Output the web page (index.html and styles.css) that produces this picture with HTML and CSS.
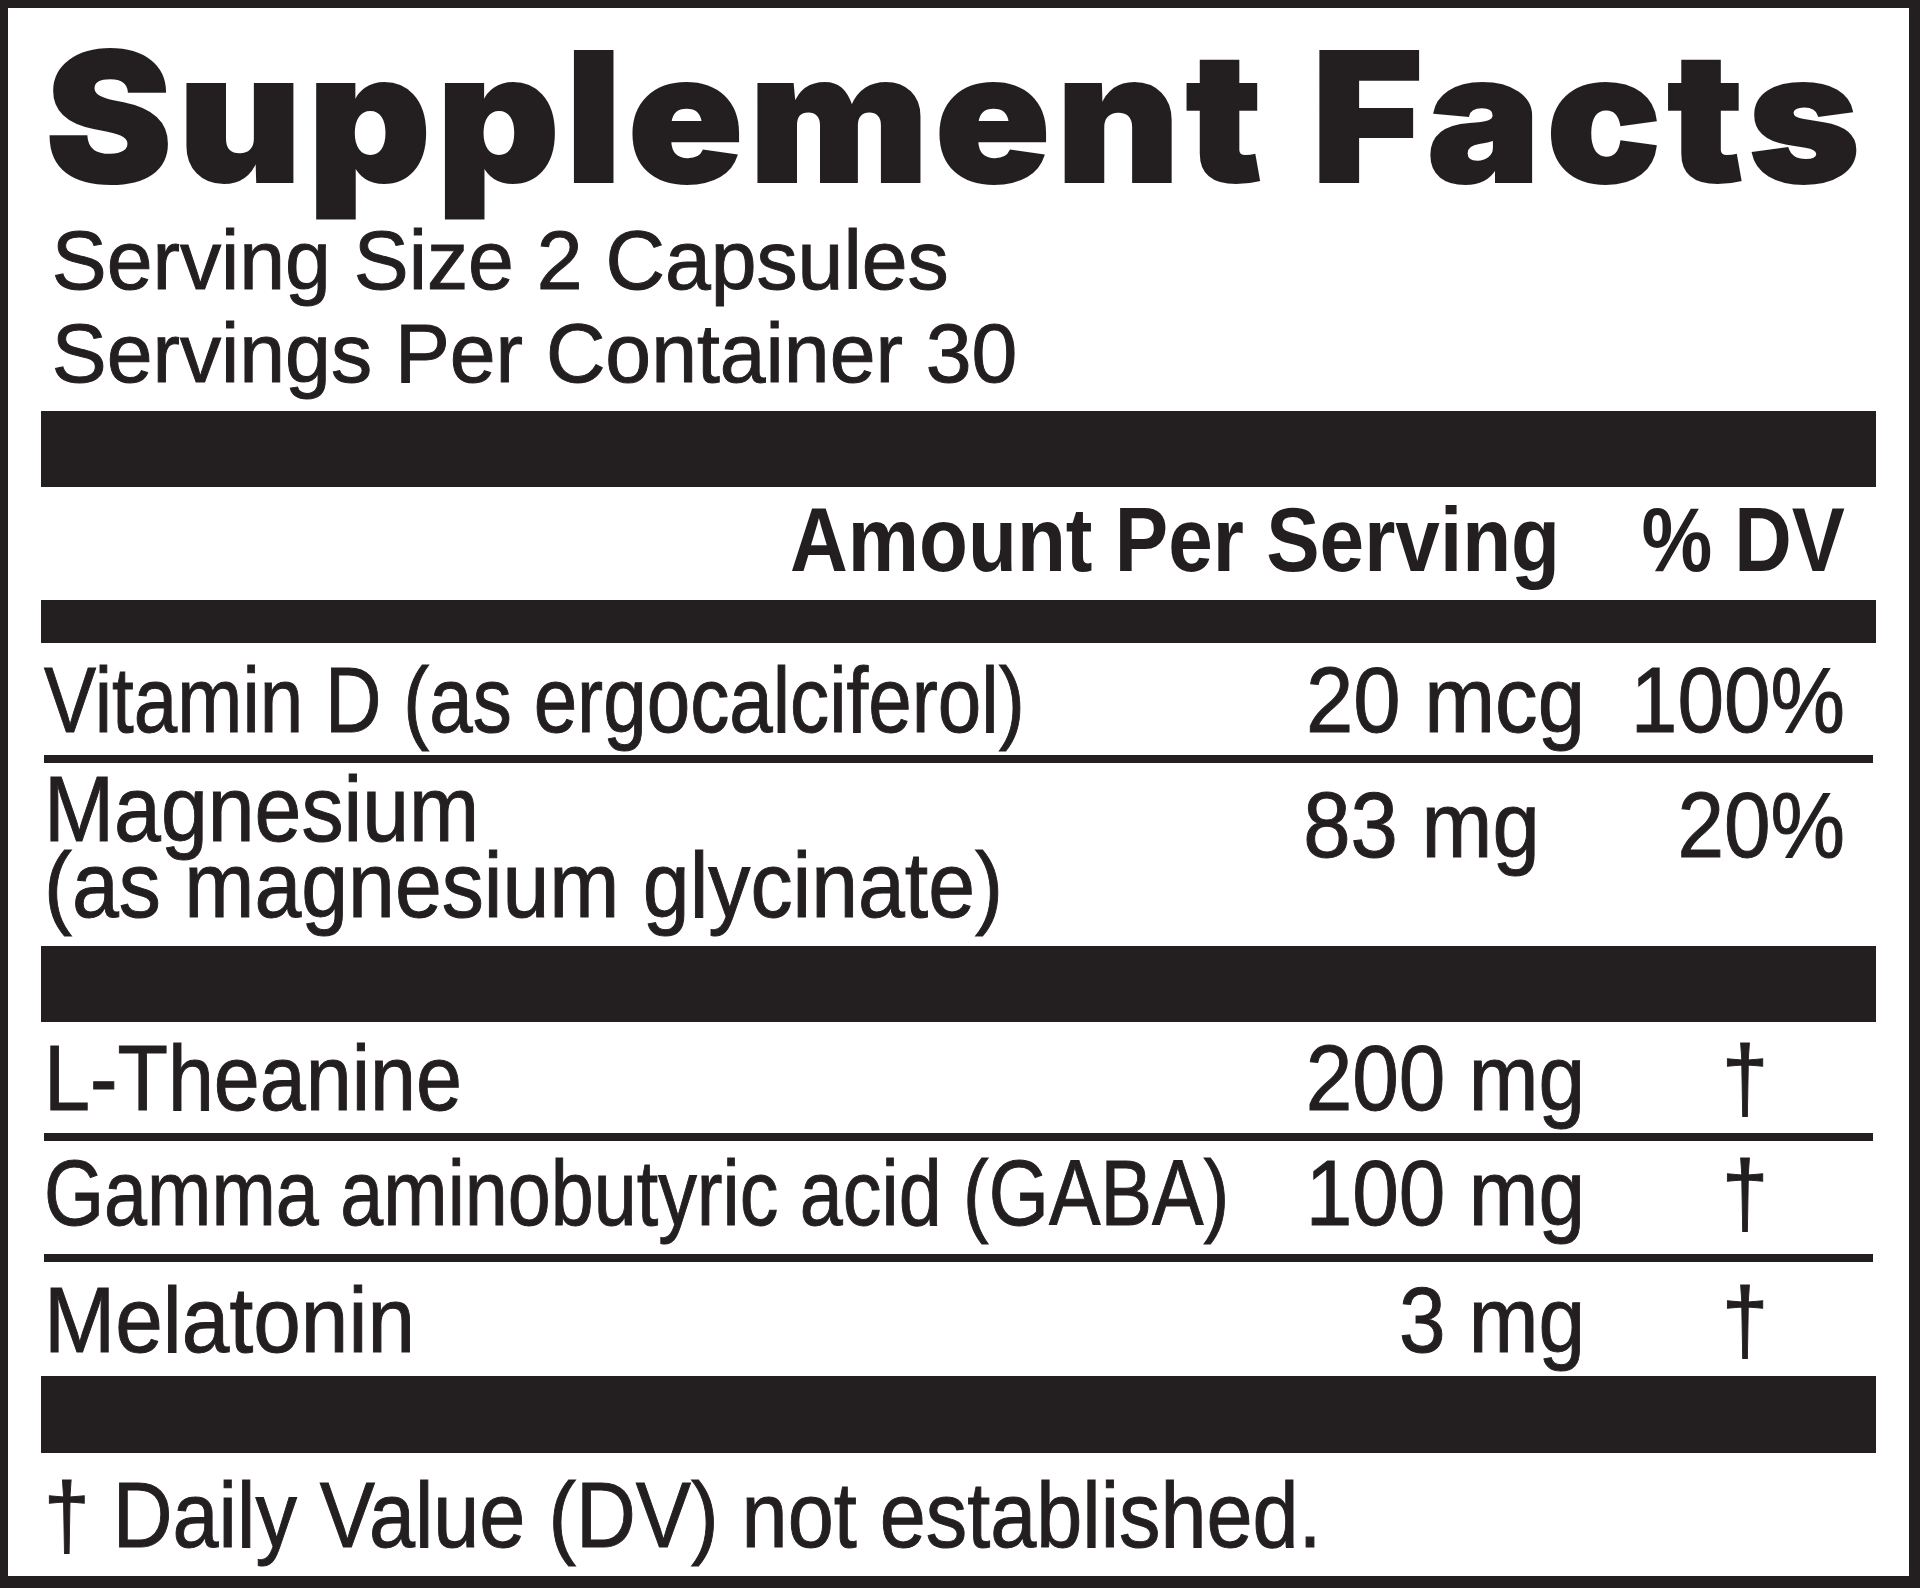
FILE: index.html
```html
<!DOCTYPE html>
<html lang="en">
<head>
<meta charset="utf-8">
<title>Supplement Facts</title>
<link rel="stylesheet" href="styles.css">
</head>
<body>
<div class="label">
  <h1 class="title">Supplement Facts</h1>
  <div class="serving-block">
    <div class="serving">Serving Size 2 Capsules</div>
    <div class="serving">Servings Per Container 30</div>
  </div>
  <div class="bar bar-xl bar-first"></div>
  <div class="row head">
    <div class="cell h-amt">Amount Per Serving</div>
    <div class="cell h-dv">% DV</div>
  </div>
  <div class="bar bar-md"></div>
  <div class="row r-vit">
    <div class="cell name w-vit">Vitamin D (as ergocalciferol)</div>
    <div class="cell amt w-mcg">20 mcg</div>
    <div class="cell dv">100%</div>
  </div>
  <div class="rule"></div>
  <div class="row r-mag">
    <div class="cell name w-mag">Magnesium<br>(as magnesium glycinate)</div>
    <div class="cell amt amt-left w-mcg">83 mg</div>
    <div class="cell dv">20%</div>
  </div>
  <div class="bar bar-xl"></div>
  <div class="row r-the">
    <div class="cell name w-the">L-Theanine</div>
    <div class="cell amt">200 mg</div>
    <div class="cell dv dag">†</div>
  </div>
  <div class="rule"></div>
  <div class="row r-gaba">
    <div class="cell name w-gaba">Gamma aminobutyric acid (GABA)</div>
    <div class="cell amt">100 mg</div>
    <div class="cell dv dag">†</div>
  </div>
  <div class="rule"></div>
  <div class="row r-mel">
    <div class="cell name w-mel">Melatonin</div>
    <div class="cell amt">3 mg</div>
    <div class="cell dv dag">†</div>
  </div>
  <div class="bar bar-last"></div>
  <div class="foot">† Daily Value (DV) not established.</div>
</div>
</body>
</html>
```

FILE: styles.css
```css
* {
  box-sizing: border-box;
  margin: 0;
  padding: 0;
}

html, body {
  margin: 0;
  background: #ffffff;
}

body {
  font-family: "Liberation Sans", Arial, sans-serif;
  color: #231f20;
}

.label {
  width: 1920px;
  height: 1588px;
  border-style: solid;
  border-color: #231f20;
  border-width: 8px 11px 12px 8px;
  padding: 0 33px;
  display: flex;
  flex-direction: column;
  overflow: hidden;
}

.label > * {
  flex-shrink: 0;
}

.title {
  font-family: Inter, Roboto, "Liberation Sans", sans-serif;
  font-weight: 900;
  font-size: 180px;
  line-height: 176px;
  height: 176px;
  margin-top: 21px;
  padding-left: 4px;
  letter-spacing: 5.4px;
  white-space: nowrap;
  -webkit-text-stroke: 2px #231f20;
  transform: scaleX(1.06);
  transform-origin: left center;
}

.serving-block {
  margin-top: 9px;
  height: 186px;
}

.serving {
  font-size: 84px;
  line-height: 93px;
  padding-left: 11px;
  white-space: nowrap;
  -webkit-text-stroke: 1px #231f20;
  transform: scaleX(0.98);
  transform-origin: left center;
}

.bar {
  background: #231f20;
}

.bar-first {
  margin-top: 11px;
}

.bar-xl {
  height: 76px;
}

.bar-md {
  height: 43px;
}

.bar-last {
  height: 77px;
}

.rule {
  height: 8px;
  margin: 0 3px;
  background: #231f20;
}

.row {
  display: grid;
  grid-template-columns: minmax(0, 1fr) 340px 260px;
  align-items: start;
  padding: 0 31px 0 3px;
  font-size: 92px;
  line-height: 110px;
}

.cell {
  --sx: 0.91;
  white-space: nowrap;
  -webkit-text-stroke: 1px #231f20;
  transform: scaleX(var(--sx));
}

.name {
  transform-origin: left center;
}

.w-vit { --sx: 0.85; }
.w-mag { --sx: 0.915; }
.w-the { --sx: 0.898; }
.w-gaba { --sx: 0.84; }
.w-mel { --sx: 0.93; }
.w-mcg { --sx: 0.925; }

.amt {
  text-align: right;
  transform-origin: right center;
}

.amt-left {
  padding-left: 63px;
  text-align: left;
  transform-origin: left center;
}

.dv {
  text-align: right;
  transform-origin: right center;
}

.dag {
  padding-left: 60px;
  text-align: center;
  transform-origin: 160px center;
}

.head {
  height: 113px;
  font-size: 90px;
  line-height: 106px;
  font-weight: 700;
}

.head .cell {
  -webkit-text-stroke: 0;
}

.h-amt {
  --sx: 0.89;
  grid-column: 1 / 3;
  text-align: right;
  margin-right: 25px;
  transform-origin: right center;
}

.h-dv {
  --sx: 0.885;
  text-align: right;
  transform-origin: right center;
}

.r-vit {
  height: 112px;
  padding-top: 2px;
}

.r-mag {
  height: 183px;
  line-height: 76px;
}

.r-mag .name {
  padding-top: 8px;
}

.r-mag .amt,
.r-mag .dv {
  padding-top: 24px;
}

.r-the {
  height: 111px;
  padding-top: 1px;
}

.r-gaba {
  height: 113px;
  line-height: 104px;
}

.r-mel {
  height: 114px;
  padding-top: 3px;
}

.foot {
  height: 123px;
  padding-top: 7px;
  padding-left: 3px;
  font-size: 92px;
  line-height: 110px;
  white-space: nowrap;
  -webkit-text-stroke: 1px #231f20;
  transform: scaleX(0.9);
  transform-origin: left center;
}
```
